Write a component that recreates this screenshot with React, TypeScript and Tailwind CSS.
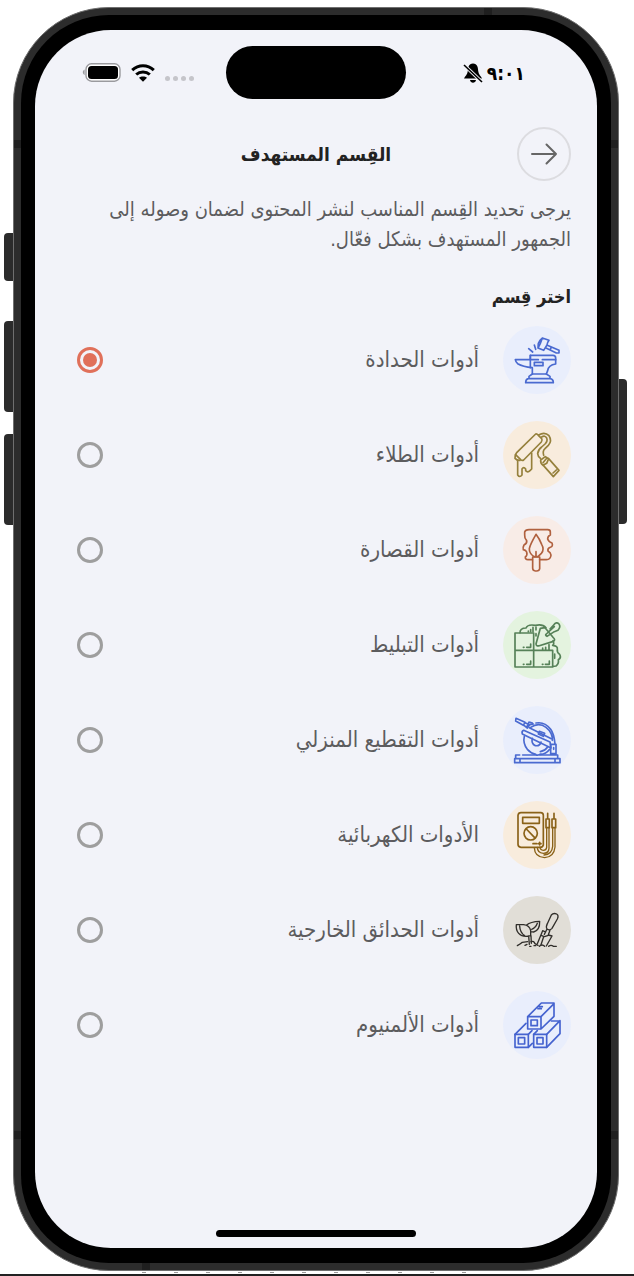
import { useState } from "react";
import type { ReactNode } from "react";

type Category = { id: string; label: string; tile: string; icon: ReactNode };

function Icon({ children, width = 5 }: { children: ReactNode; width?: number }) {
  return (
    <svg
      viewBox="0 0 204 204"
      className="size-full"
      fill="none"
      stroke="currentColor"
      strokeWidth={width}
      strokeLinecap="round"
      strokeLinejoin="round"
      aria-hidden="true"
    >
      {children}
    </svg>
  );
}

const categories: Category[] = [
  {
    id: "forge",
    label: "أدوات الحدادة",
    tile: "bg-[#e9eefc] text-[#4a6ad0]",
    icon: (
      <Icon>
        <path d="M82 88H150Q158 88 158 96V114Q136 117 134 134L130 144H88V125Q60 122 44 113Q38 108 37 101H82V88Z" />
        <path d="M82 88V125M82 101H106M118 101H158" />
        <path d="M94 109H120V119H94Z" />
        <path d="M88 144L78 151V158H141V151L130 144M76 158Q68 159 68 170H151Q151 159 141 158M83 158H98M109 158H126" />
        <path d="M118 36L138 43Q132 51 132 57L122 73L105 66Q112 55 118 36ZM118 36L111 43L106 52L105 66M133 58L168 73V81L160 81L129 66M145 63L142 70" />
        <path d="M77 68L89 78M94 57L98 70" />
      </Icon>
    ),
  },
  {
    id: "paint",
    label: "أدوات الطلاء",
    tile: "bg-[#f8ecdd] text-[#95803c]",
    icon: (
      <Icon>
        <path d="M98 39Q102 38 106 43L116 53Q119 58 115 63L62 117Q58 120 53 116L40 103Q37 99 41 95Z" />
        <path d="M37 101L36 112Q42 119 51 118" />
        <path d="M107 42Q125 31 138 44Q148 59 136 73L126 83Q118 90 122 103M116 48Q126 42 131 51Q135 60 126 69L116 78Q105 86 104 98Q105 108 112 112" />
        <path d="M44 118V162Q50 171 57 162V144Q62 136 68 144V149Q74 156 81 149L86 144V96" />
        <path d="M113 117L127 107L137 113L131 127L120 133Q112 127 113 117ZM121 133L151 167L168 148L137 113M120 125L131 112M150 156L160 147" />
      </Icon>
    ),
  },
  {
    id: "plaster",
    label: "أدوات القصارة",
    tile: "bg-[#f8ece7] text-[#b0613f]",
    icon: (
      <Icon>
        <path d="M88 131H75Q66 130 67 123Q74 117 71 108Q69 103 61 101Q59 94 63 87Q73 82 71 74Q64 66 65 57V48Q67 41 78 41H134Q142 41 142 48V57Q134 60 134 69Q137 78 147 81Q151 91 142 94Q133 97 135 105Q143 109 144 117Q143 131 130 131H110" />
        <path d="M99 55Q109 68 116 85Q125 101 115 112L105 122H93Q78 112 79 98Q81 86 99 55Z" />
        <path d="M89 123H110V158Q109 165 101 165H97Q89 164 89 157ZM99 123V107" />
      </Icon>
    ),
  },
  {
    id: "tiling",
    label: "أدوات التبليط",
    tile: "bg-[#e4f3df] text-[#568158]",
    icon: (
      <Icon>
        <path d="M36 66H92V168H36ZM36 118H149V168H36M91 118L149 118" />
        <path d="M51 65Q51 51 69 51Q74 39 97 43Q119 38 129 50M150 89Q155 100 149 103Q165 105 163 115Q161 123 170 130Q176 140 166 146Q168 159 159 165L150 166" />
        <path d="M126 50L112 52L99 99Q100 107 109 104L151 91Q159 86 150 79ZM130 69L154 47M141 54L152 42Q160 31 168 39Q174 47 165 58L154 62L132 76Q125 72 130 69" />
        <path d="M61 109H63M71 109H83V99M61 160H63M71 160H83V150M118 160H120M127 160H139V150M76 62V60M83 62V56M90 62V49M99 57V48M99 68V75M119 111V117M128 117V109M138 117V101M155 129V142" />
      </Icon>
    ),
  },
  {
    id: "cutting",
    label: "أدوات التقطيع المنزلي",
    tile: "bg-[#e9eefc] text-[#4a6ad0]",
    icon: (
      <Icon>
        <path d="M39 37L66 49L61 58L38 45ZM66 50L80 56L73 66L63 58M81 49L88 51M78 48L72 62M82 56L91 54" />
        <path d="M62 73L141 108L144 126L58 84Q55 76 62 73ZM79 65L145 98" />
        <path d="M99 51Q125 46 143 70Q153 83 156 114M83 64Q107 48 129 64Q149 80 148 103M64 91Q59 111 73 130Q85 143 98 145M111 145Q128 146 140 130" />
        <path d="M88 97Q84 113 97 119Q111 121 114 108M112 137Q127 134 134 123M109 76L125 82L121 91L106 84Z" />
        <path d="M143 115H159V143H143ZM152 125V130M38 158V147H50M59 147H164V158M35 158H171V170H35ZM51 158V170M156 158V170M98 146Q104 149 114 145" />
      </Icon>
    ),
  },
  {
    id: "electric",
    label: "الأدوات الكهربائية",
    tile: "bg-[#f8ecdd] text-[#8a6218]",
    icon: (
      <Icon>
        <path d="M54 35H113Q121 35 121 43V132Q119 139 112 139H54Q45 138 45 130V43Q46 35 54 35Z" />
        <path d="M59 49H109V67H59ZM70 84L95 110" />
        <circle cx="83" cy="97" r="20" />
        <path d="M129 54H139V80H129ZM147 54H158V80H147ZM134 54V37M153 54V37" />
        <path d="M131 80V139Q130 148 121 148Q111 147 111 138M138 80V142Q137 157 121 157Q103 156 103 139M149 80V136Q147 160 123 162M156 80V138Q153 168 125 170Q95 168 94 140" strokeWidth="4" />
        <path d="M90 128H101M110 124V132M106 128H114" />
      </Icon>
    ),
  },
  {
    id: "garden",
    label: "أدوات الحدائق الخارجية",
    tile: "bg-[#e1ded7] text-[#302e2a]",
    icon: (
      <Icon width={4}>
        <path d="M40 86H62Q80 88 83 104V119Q60 126 47 112Q38 102 40 86ZM71 87Q82 77 110 76Q111 103 92 108L84 107M50 90Q51 110 65 119M103 82Q98 96 86 100M77 120L79 145M84 119L85 142" />
        <path d="M145 57Q151 50 161 54Q168 58 163 69L147 97Q140 105 132 99Q128 93 133 83ZM132 99L124 115M141 103L136 116M119 104L103 143M119 104L128 108M122 122L114 146M136 117L147 120L130 150M114 118L124 122L134 119" />
        <path d="M43 149Q54 143 58 139L74 137M84 137Q93 134 96 143L105 148M66 148L72 145M80 151H84M93 149H98M109 151Q117 143 125 151M137 151Q144 145 151 151H160" />
      </Icon>
    ),
  },
  {
    id: "aluminium",
    label: "أدوات الألمنيوم",
    tile: "bg-[#e9eefc] text-[#4563cf]",
    icon: (
      <Icon>
        <path d="M74 77H114V114H74ZM84 87H103V104H84ZM74 77L115 36H153V76L114 114M114 77L153 38M105 53H115M109 47H118" />
        <path d="M36 130H76V169H36ZM46 140H65V159H46ZM92 130H131V169H92ZM102 140H120V159H102Z" />
        <path d="M36 130L69 97M76 130L87 119M92 130L103 119M131 130L171 89M145 90H171V128L131 169M76 169L88 157" />
      </Icon>
    ),
  },
];

function StatusBar() {
  return (
    <div className="grid grid-cols-[1fr_180px_1fr] items-center pt-4 text-black">
      <div className="flex items-center gap-1 pr-[72px]">
        <time className="text-[19px] leading-6 font-bold">٩:٠١</time>
        <svg className="size-5 shrink-0" viewBox="0 0 20 20" fill="currentColor" aria-hidden="true">
          <path d="M10 0.5C5.6 1 5 4 4.8 8C4.6 11.5 2 13 1 15.5H19C18 13 15.4 11.5 15.2 8C15 4 14.4 1 10 0.5ZM7 17H13C12.5 20.5 7.5 20.5 7 17Z" />
          <path d="M0 1L20 20" stroke="#f2f3f9" strokeWidth="3.4" />
          <path d="M1 2L19 19" stroke="currentColor" strokeWidth="1.6" />
        </svg>
      </div>
      <div className="h-[53px] rounded-full bg-black" />
      <div className="flex items-center justify-end gap-[10px] pl-[47px]">
        <div className="mt-3 flex gap-[3px]">
          <span className="size-[5px] rounded-sm bg-[#c5c5ca]" />
          <span className="size-[5px] rounded-sm bg-[#c5c5ca]" />
          <span className="size-[5px] rounded-sm bg-[#c5c5ca]" />
          <span className="size-[5px] rounded-sm bg-[#c5c5ca]" />
        </div>
        <svg className="h-[18px] w-6" viewBox="0 0 24 18" fill="none" stroke="currentColor" strokeWidth="3" aria-hidden="true">
          <path d="M1.2 6.2C7.5 0.3 16.5 0.3 22.8 6.2M5.2 10.5C9 7 15 7 18.8 10.5" />
          <path d="M12 17.8L8 13.8C10 12 14 12 16 13.8Z" fill="currentColor" stroke="none" />
        </svg>
        <svg className="h-[19px] w-[39px]" viewBox="0 0 39 19" aria-hidden="true">
          <rect x="4" y="0.8" width="34" height="17.4" rx="5.5" fill="#fff" stroke="#9a9a9e" strokeWidth="1.4" />
          <rect x="6" y="3" width="30" height="13" rx="3.5" fill="#000" />
          <path d="M2.6 6.5V12C0.2 11 0.2 7.5 2.6 6.5Z" fill="#9a9a9e" />
        </svg>
      </div>
    </div>
  );
}

export default function App() {
  const [selected, setSelected] = useState("forge");

  return (
    <div className="flex min-h-screen flex-col bg-white pt-[7px] font-['DejaVu_Sans_Condensed','DejaVu_Sans',sans-serif]">
      <div className="relative mr-[15px] ml-[13px] flex flex-1 flex-col">
        <span className="absolute top-[226px] -left-[9px] h-[48px] w-[10px] rounded-l-[4px] bg-[#2b2b2b]" />
        <span className="absolute top-[314px] -left-[9px] h-[91px] w-[10px] rounded-l-[4px] bg-[#2b2b2b]" />
        <span className="absolute top-[427px] -left-[9px] h-[91px] w-[10px] rounded-l-[4px] bg-[#2b2b2b]" />
        <span className="absolute top-[372px] -right-[8px] h-[145px] w-[9px] rounded-r-[4px] bg-[#2b2b2b]" />

        <div className="relative flex flex-1 flex-col rounded-[96px] border border-[#6f6f6f] bg-[#2c2c2c] p-[7px]">
          <span className="absolute top-[132px] left-0 h-2 w-[7px] bg-[#1f1f1f]" />
          <span className="absolute top-[132px] right-0 h-2 w-[7px] bg-[#1f1f1f]" />
          <span className="absolute bottom-[131px] left-0 h-2 w-[7px] bg-[#1f1f1f]" />
          <span className="absolute right-0 bottom-[131px] h-2 w-[7px] bg-[#1f1f1f]" />
          <span className="absolute top-0 right-[126px] h-[7px] w-2 bg-[#1f1f1f]" />
          <span className="absolute bottom-0 left-[128px] h-[7px] w-2 bg-[#1f1f1f]" />

          <div className="flex flex-1 flex-col rounded-[88px] bg-black px-[14px] py-[15px]">
            <main dir="rtl" className="flex flex-1 flex-col rounded-[76px] bg-[#f2f3f9]">
              <StatusBar />

              <header className="mt-7 grid grid-cols-[54px_1fr_54px] items-center px-[26px]">
                <button
                  type="button"
                  aria-label="رجوع"
                  className="flex size-[54px] items-center justify-center rounded-full border-2 border-[#dcdce0] text-[#666]"
                >
                  <svg className="size-7" viewBox="0 0 28 28" fill="none" stroke="currentColor" strokeWidth="2" strokeLinecap="round" strokeLinejoin="round" aria-hidden="true">
                    <path d="M2 14H26M16.5 4.5L26 14L16.5 23.5" />
                  </svg>
                </button>
                <h1 className="text-center text-[19px] leading-8 font-bold text-[#222]">القِسم المستهدف</h1>
              </header>

              <p className="mt-[13px] px-[26px] text-[20px] leading-[30px] text-[#5c5c5e]">
                يرجى تحديد القِسم المناسب لنشر المحتوى لضمان وصوله إلى الجمهور المستهدف بشكل فعّال.
              </p>

              <fieldset className="mt-[27px] px-[26px]">
                <legend className="text-[18px] leading-8 font-bold text-[#222]">اختر قِسم</legend>
                <div className="mt-[13px] flex flex-col gap-[27px]">
                  {categories.map((c) => (
                    <label key={c.id} className="flex cursor-pointer items-center gap-6 pl-4">
                      <span className={`size-[68px] shrink-0 rounded-full ${c.tile}`}>{c.icon}</span>
                      <span className="flex-1 text-[22px] leading-8 text-[#5c5c5e]">{c.label}</span>
                      <input
                        type="radio"
                        name="category"
                        checked={selected === c.id}
                        onChange={() => setSelected(c.id)}
                        className="grid size-[26px] shrink-0 appearance-none place-content-center rounded-full border-[3px] border-[#9e9e9e] checked:border-[#e0705a] checked:before:size-[14px] checked:before:rounded-full checked:before:bg-[#e0705a] checked:before:content-['']"
                      />
                    </label>
                  ))}
                </div>
              </fieldset>

              <div className="mt-auto flex justify-center pt-10 pb-[11px]">
                <span className="h-[7px] w-[200px] rounded-full bg-black" />
              </div>
            </main>
          </div>
        </div>
      </div>
      <div className="mt-px mr-[168px] ml-[142px] h-px bg-[repeating-linear-gradient(90deg,#999_0px,#999_4px,transparent_4px,transparent_32px)]" />
      <div className="mt-px h-[2px] bg-[#222]" />
    </div>
  );
}
